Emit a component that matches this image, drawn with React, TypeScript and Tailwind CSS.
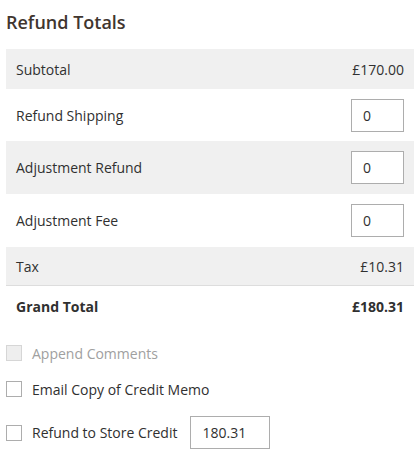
import React from "react";

const font = { fontFamily: '"Open Sans", "Noto Sans", sans-serif' };

function NumInput({ value, w = "w-[53px]" }: { value: string; w?: string }) {
  return (
    <div className={`${w} h-[33px] border border-[#adadad] bg-white flex items-center px-[11px] text-[14px] text-[#303030]`}>
      {value}
    </div>
  );
}

function Box({ disabled }: { disabled?: boolean }) {
  return (
    <div
      className={`w-[16px] h-[16px] border ${disabled ? "border-[#d6d6d6] bg-[#eeeeee]" : "border-[#adadad] bg-white"}`}
    />
  );
}

export default function App() {
  return (
    <div className="w-[416px] h-[467px] bg-white text-[#303030]" style={font}>
      <div className="pl-[6px] pr-[2px] pt-[9px]">
        <h2 className="text-[18px] font-semibold text-[#41362f] leading-[26px]">Refund Totals</h2>
        <div className="mt-[14px] text-[14px]">
          <div className="h-[40px] bg-[#f0f0f0] flex items-center justify-between px-[10px]">
            <span>Subtotal</span>
            <span>£170.00</span>
          </div>
          <div className="h-[52px] flex items-center justify-between px-[10px]">
            <span>Refund Shipping</span>
            <NumInput value="0" />
          </div>
          <div className="h-[53px] bg-[#f0f0f0] flex items-center justify-between px-[10px]">
            <span>Adjustment Refund</span>
            <NumInput value="0" />
          </div>
          <div className="h-[53px] flex items-center justify-between px-[10px]">
            <span>Adjustment Fee</span>
            <NumInput value="0" />
          </div>
          <div className="h-[39px] bg-[#f0f0f0] flex items-center justify-between px-[10px] border-b border-[#dddddd]">
            <span>Tax</span>
            <span>£10.31</span>
          </div>
          <div className="h-[40px] flex items-center justify-between px-[10px] font-bold">
            <span>Grand Total</span>
            <span>£180.31</span>
          </div>
        </div>
        <div className="mt-[19px] flex flex-col text-[14px]">
          <div className="flex items-center gap-[10px] h-[16px]">
            <Box disabled />
            <span className="text-[#a0a0a0]">Append Comments</span>
          </div>
          <div className="flex items-center gap-[10px] h-[16px] mt-[20px]">
            <Box />
            <span>Email Copy of Credit Memo</span>
          </div>
          <div className="flex items-center gap-[10px] mt-[19px]">
            <Box />
            <span>Refund to Store Credit</span>
            <div className="ml-[3px] w-[80px] h-[33px] border border-[#adadad] bg-white flex items-center px-[11px]">
              180.31
            </div>
          </div>
        </div>
      </div>
    </div>
  );
}
